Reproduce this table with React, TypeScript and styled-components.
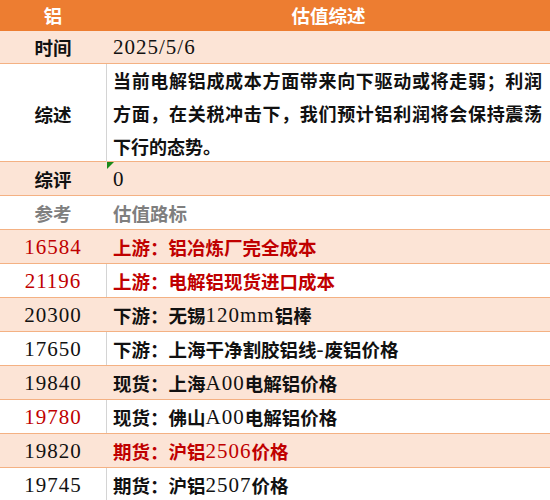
import * as React from "react";
import styled, { createGlobalStyle } from "styled-components";

const ORANGE = "#ED7D31";
const PEACH = "#FCE4D6";
const LINE = "#F4B183";
const GRID = "#D4D4D4";
const RED = "#C00000";
const GREY = "#7F7F7F";

type Fill = "head" | "peach" | "white";
type Tone = "black" | "red" | "grey" | "white";

const toneColor = (t: Tone) =>
  t === "red" ? RED : t === "grey" ? GREY : t === "white" ? "#ffffff" : "#111111";

const GlobalStyle = createGlobalStyle`
  html, body {
    margin: 0;
    padding: 0;
    background: #ffffff;
  }
  body {
    font-family: "Liberation Serif", "Noto Sans CJK SC", serif;
  }
`;

const Sheet = styled.div`
  width: 550px;
  height: 500px;
  overflow: hidden;
  display: flex;
  flex-direction: column;
`;

const Row = styled.div<{ $fill: Fill; $height?: number }>`
  display: grid;
  grid-template-columns: 107px 1fr;
  flex-shrink: 0;
  box-sizing: border-box;
  height: ${(p) => p.$height ?? 34}px;
  background: ${(p) => (p.$fill === "head" ? ORANGE : p.$fill === "peach" ? PEACH : "#ffffff")};
  border-bottom: 1px solid ${(p) => (p.$fill === "head" ? ORANGE : LINE)};
`;

const Label = styled.div<{ $tone: Tone; $divider?: boolean }>`
  display: flex;
  align-items: center;
  justify-content: center;
  border-right: 1px solid ${(p) => (p.$divider ? GRID : "transparent")};
  font-family: "Noto Sans CJK SC", sans-serif;
  font-weight: 700;
  font-size: 18.5px;
  line-height: 24px;
  color: ${(p) => toneColor(p.$tone)};
`;

const Content = styled.div<{ $tone: Tone; $center?: boolean }>`
  position: relative;
  display: flex;
  align-items: center;
  justify-content: ${(p) => (p.$center ? "center" : "flex-start")};
  padding-left: ${(p) => (p.$center ? 0 : 6)}px;
  padding-right: ${(p) => (p.$center ? 0 : 8)}px;
  font-family: "Noto Sans CJK SC", sans-serif;
  font-weight: 700;
  font-size: 18.5px;
  line-height: 24px;
  color: ${(p) => toneColor(p.$tone)};
  white-space: nowrap;
`;

const Latin = styled.span`
  font-family: "Liberation Serif", serif;
  font-weight: 400;
  font-size: 21px;
  letter-spacing: 1px;
`;

const Para = styled.div`
  display: flex;
  flex-direction: column;
  width: 100%;
  font-size: 18px;
`;

const ParaLine = styled.div<{ $justify?: boolean }>`
  line-height: 33px;
  white-space: nowrap;
  text-align: ${(p) => (p.$justify ? "justify" : "left")};
  text-align-last: ${(p) => (p.$justify ? "justify" : "left")};
  text-justify: inter-character;
`;

const Marker = styled.span`
  position: absolute;
  top: 0;
  left: 0;
  width: 0;
  height: 0;
  border-top: 7px solid #1a8a1a;
  border-right: 7px solid transparent;
`;

function Mixed({ text }: { text: string }) {
  const parts = text.split(/([A-Za-z0-9/.\-]+)/);
  return (
    <>
      {parts.map((part, i) =>
        /^[A-Za-z0-9/.\-]+$/.test(part) ? <Latin key={i}>{part}</Latin> : <span key={i}>{part}</span>
      )}
    </>
  );
}

const summary = [
  "当前电解铝成成本方面带来向下驱动或将走弱；利润",
  "方面，在关税冲击下，我们预计铝利润将会保持震荡",
  "下行的态势。",
];

const prices: { value: string; label: string; numRed?: boolean; textRed?: boolean }[] = [
  { value: "16584", label: "上游：铝冶炼厂完全成本", numRed: true, textRed: true },
  { value: "21196", label: "上游：电解铝现货进口成本", numRed: true, textRed: true },
  { value: "20300", label: "下游：无锡120mm铝棒" },
  { value: "17650", label: "下游：上海干净割胶铝线-废铝价格" },
  { value: "19840", label: "现货：上海A00电解铝价格" },
  { value: "19780", label: "现货：佛山A00电解铝价格", numRed: true },
  { value: "19820", label: "期货：沪铝2506价格", textRed: true },
  { value: "19745", label: "期货：沪铝2507价格" },
];

export default function App() {
  return (
    <>
      <GlobalStyle />
      <Sheet>
        <Row $fill="head" $height={31}>
          <Label $tone="white">铝</Label>
          <Content $tone="white" $center>
            估值综述
          </Content>
        </Row>
        <Row $fill="peach" $height={33}>
          <Label $tone="black">时间</Label>
          <Content $tone="black">
            <Mixed text="2025/5/6" />
          </Content>
        </Row>
        <Row $fill="white" $height={98}>
          <Label $tone="black" $divider>
            综述
          </Label>
          <Content $tone="black">
            <Para>
              {summary.map((line, i) => (
                <ParaLine key={i} $justify={i < summary.length - 1}>
                  {line}
                </ParaLine>
              ))}
            </Para>
          </Content>
        </Row>
        <Row $fill="peach">
          <Label $tone="black">综评</Label>
          <Content $tone="black">
            <Marker />
            <Mixed text="0" />
          </Content>
        </Row>
        <Row $fill="white">
          <Label $tone="grey">参考</Label>
          <Content $tone="grey">估值路标</Content>
        </Row>
        {prices.map((p, i) => (
          <Row key={p.value} $fill={i % 2 === 0 ? "peach" : "white"}>
            <Label $tone={p.numRed ? "red" : "black"} $divider={i % 2 === 1}>
              <Latin>{p.value}</Latin>
            </Label>
            <Content $tone={p.textRed ? "red" : "black"}>
              <Mixed text={p.label} />
            </Content>
          </Row>
        ))}
      </Sheet>
    </>
  );
}
